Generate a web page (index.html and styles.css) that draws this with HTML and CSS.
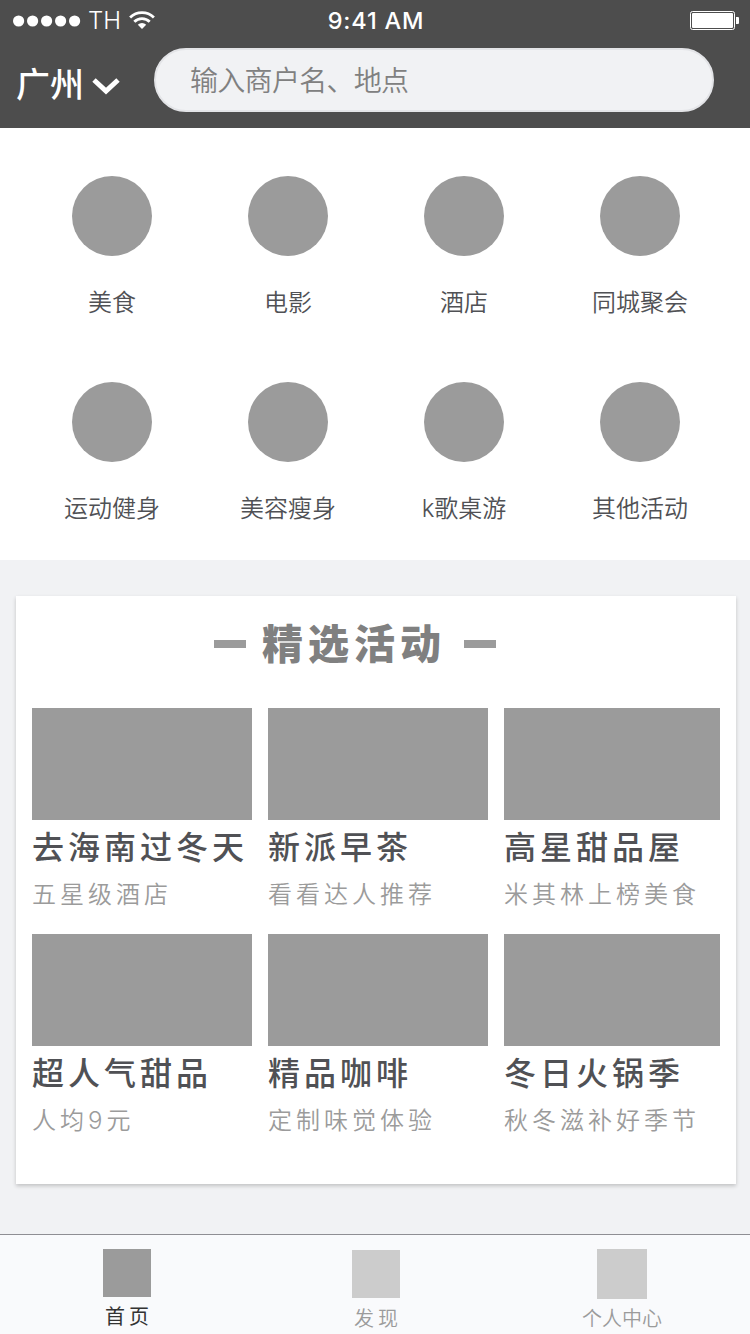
FILE: index.html
```html
<!DOCTYPE html>
<html lang="zh-CN">
<head>
    <meta charset="UTF-8">
    <meta name="viewport" content="width=device-width, initial-scale=1.0">
    <title>首页</title>
    <link rel="stylesheet" href="styles.css">
</head>
<body>
    <header>
        <div class="status-bar">
            <div class="signal">
                <svg width="68" height="12" viewBox="0 0 68 12" fill="#fff">
                    <circle cx="5.6" cy="6" r="5.6"/>
                    <circle cx="19.6" cy="6" r="5.6"/>
                    <circle cx="33.6" cy="6" r="5.6"/>
                    <circle cx="47.6" cy="6" r="5.6"/>
                    <circle cx="61.6" cy="6" r="5.6"/>
                </svg>
                <span class="carrier">TH</span>
                <svg class="wifi" width="26" height="18" viewBox="0 0 26 18" fill="none" stroke="#fff" stroke-width="2.8">
                    <path d="M1.100 6.400a17.200 17.200 0 0 1 23.800 0"/>
                    <path d="M5.300 10.800a11 11 0 0 1 15.400 0"/>
                    <path d="M13 18l-4.200-4.200a6 6 0 0 1 8.400 0z" fill="#fff" stroke="none"/>
                </svg>
            </div>
            <div class="time">9:41 AM</div>
            <svg class="battery" width="49" height="19" viewBox="0 0 49 19">
                <rect x=".5" y=".5" width="44" height="18" rx="2" fill="none" stroke="#fff"/>
                <rect x="2" y="2" width="41" height="15" rx="1" fill="#fff"/>
                <path d="M46 6h2q1 0 1 1v5q0 1-1 1h-2z" fill="#fff"/>
            </svg>
        </div>
        <div class="search-bar">
            <div class="city">
                <span>广州</span>
                <svg width="28" height="18" viewBox="0 0 28 18" fill="none" stroke="#fff" stroke-width="5">
                    <path d="M2 2l12 11L26 2"/>
                </svg>
            </div>
            <div class="search">输入商户名、地点</div>
        </div>
    </header>

    <nav class="categories">
        <div class="category"><i></i><span>美食</span></div>
        <div class="category"><i></i><span>电影</span></div>
        <div class="category"><i></i><span>酒店</span></div>
        <div class="category"><i></i><span>同城聚会</span></div>
        <div class="category"><i></i><span>运动健身</span></div>
        <div class="category"><i></i><span>美容瘦身</span></div>
        <div class="category"><i></i><span>k歌桌游</span></div>
        <div class="category"><i></i><span>其他活动</span></div>
    </nav>

    <section class="featured">
        <h2>精选活动</h2>
        <div class="cards">
            <div class="card">
                <div class="photo"></div>
                <h3>去海南过冬天</h3>
                <p>五星级酒店</p>
            </div>
            <div class="card">
                <div class="photo"></div>
                <h3>新派早茶</h3>
                <p>看看达人推荐</p>
            </div>
            <div class="card">
                <div class="photo"></div>
                <h3>高星甜品屋</h3>
                <p>米其林上榜美食</p>
            </div>
            <div class="card">
                <div class="photo"></div>
                <h3>超人气甜品</h3>
                <p>人均9元</p>
            </div>
            <div class="card">
                <div class="photo"></div>
                <h3>精品咖啡</h3>
                <p>定制味觉体验</p>
            </div>
            <div class="card">
                <div class="photo"></div>
                <h3>冬日火锅季</h3>
                <p>秋冬滋补好季节</p>
            </div>
        </div>
    </section>

    <footer class="tab-bar">
        <div class="tab active"><i></i><span>首页</span></div>
        <div class="tab discover"><i></i><span>发现</span></div>
        <div class="tab profile"><i></i><span>个人中心</span></div>
    </footer>
</body>
</html>
```

FILE: styles.css
```css
* {
    box-sizing: border-box;
}
body {
    margin: 0;
    width: 750px;
    height: 1334px;
    display: flex;
    flex-direction: column;
    overflow: hidden;
    font-family: Inter, "Noto Sans CJK SC", sans-serif;
    background-color: #f1f2f4;
}
h2, h3, p {
    margin: 0;
}
svg {
    display: block;
}

/* header */
header {
    height: 128px;
    background-color: #4d4d4d;
    color: #fff;
}
.status-bar {
    display: grid;
    grid-template-columns: 1fr auto 1fr;
    align-items: center;
    height: 41px;
    padding: 0 11px 0 13px;
}
.signal {
    display: flex;
    align-items: center;
}
.carrier {
    margin-left: 7px;
    width: 34px;
    font-size: 24px;
    font-weight: 300;
    line-height: 24px;
}
.wifi {
    margin-left: 7px;
    margin-top: -1px;
}
.time {
    font-size: 23.5px;
    font-weight: 500;
    line-height: 24px;
    letter-spacing: 0.8px;
}
.battery {
    justify-self: end;
}
.search-bar {
    display: flex;
    padding: 7px 36px 0 16px;
}
.city {
    display: flex;
    align-items: center;
    width: 138px;
    height: 72px;
    padding-top: 2px;
    font-size: 34px;
    font-weight: 500;
    line-height: 40px;
}
.city svg {
    margin-left: 8px;
    margin-top: 4px;
}
.search {
    width: 560px;
    height: 64px;
    padding: 1px 0 0 34px;
    border: 2px solid #e3e4e7;
    border-radius: 32px;
    background-color: #f1f2f4;
    color: #808080;
    font-size: 28px;
    font-weight: 350;
    line-height: 60px;
    letter-spacing: -0.7px;
}

/* category icons */
.categories {
    display: grid;
    grid-template-columns: repeat(4, 176px);
    grid-auto-rows: 206px;
    height: 432px;
    padding: 48px 24px 0;
    background-color: #fff;
}
.category {
    display: flex;
    flex-direction: column;
    align-items: center;
    gap: 35px;
    color: #505155;
    font-size: 24px;
    font-weight: 350;
    line-height: 24px;
}
.category i {
    width: 80px;
    height: 80px;
    border-radius: 50%;
    background-color: #9b9b9b;
}

/* featured activities */
.featured {
    width: 720px;
    height: 588px;
    margin: 36px 0 0 16px;
    padding: 0 16px;
    background-color: #fff;
    box-shadow: 0 2px 4px rgba(0, 0, 0, 0.2);
}
.featured h2 {
    display: flex;
    align-items: center;
    justify-content: center;
    height: 112px;
    margin: 0 42px 0 0;
    padding-bottom: 17px;
    color: #808080;
    font-size: 41px;
    font-weight: 900;
    line-height: 48px;
    letter-spacing: 5px;
}
.featured h2::before,
.featured h2::after {
    content: "";
    width: 32px;
    height: 8px;
    background-color: #9b9b9b;
}
.featured h2::before {
    margin-right: 16px;
}
.featured h2::after {
    margin-left: 18px;
}
.cards {
    display: grid;
    grid-template-columns: 220px 220px 216px;
    grid-auto-rows: 226px;
    column-gap: 16px;
}
.photo {
    height: 112px;
    background-color: #9b9b9b;
}
.card h3 {
    margin-top: 12px;
    color: #505155;
    font-size: 32px;
    font-weight: 500;
    line-height: 32px;
    letter-spacing: 4px;
    white-space: nowrap;
}
.card p {
    margin-top: 19px;
    color: #9b9b9b;
    font-size: 24px;
    font-weight: 350;
    line-height: 24px;
    letter-spacing: 4px;
    white-space: nowrap;
}

/* bottom tabs */
.tab-bar {
    display: grid;
    grid-template-columns: 254px 244px 248px;
    height: 100px;
    margin-top: auto;
    border-top: 1px solid #8e8e93;
    background-color: #f9fafc;
}
.tab {
    display: flex;
    flex-direction: column;
    align-items: center;
    gap: 10px;
    padding-top: 14px;
    color: #9b9b9b;
    font-size: 20px;
    font-weight: 350;
    line-height: 20px;
}
.tab i {
    width: 48px;
    height: 48px;
    background-color: #ccc;
}
.tab span {
    letter-spacing: 4px;
    margin-right: -4px;
}
.tab.active {
    color: #333;
    font-weight: 400;
}
.tab.active i {
    background-color: #9b9b9b;
}
.tab.discover {
    gap: 11px;
    padding-top: 15px;
}
.tab.profile i {
    width: 50px;
    height: 50px;
}
.tab.profile span {
    margin-right: 0;
    letter-spacing: 0;
}
```
